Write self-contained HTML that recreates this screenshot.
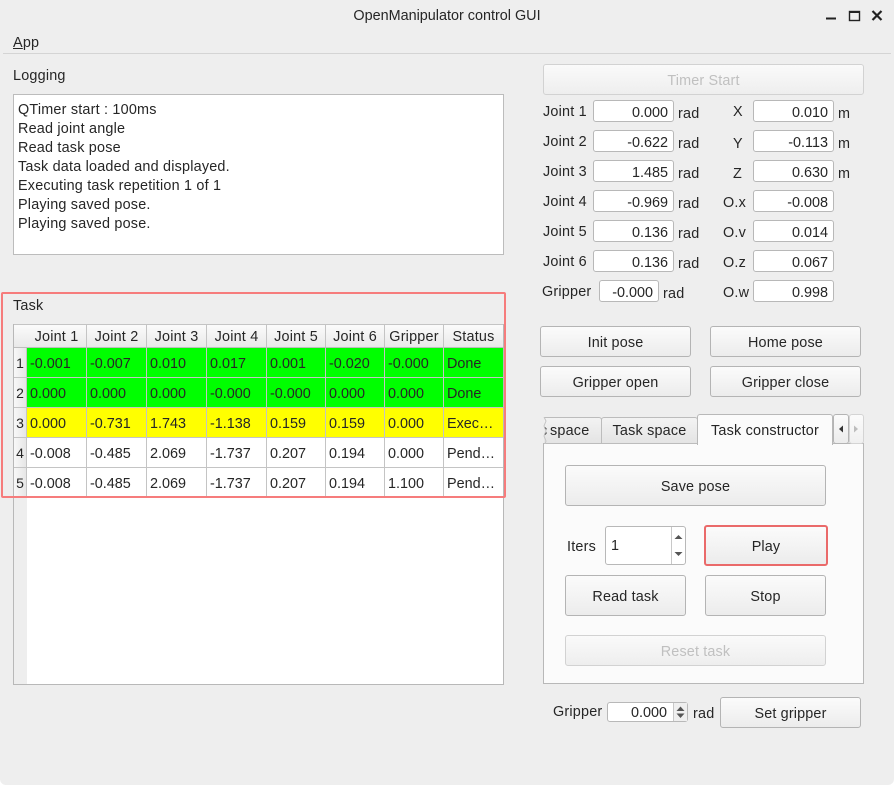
<!DOCTYPE html>
<html><head><meta charset="utf-8"><title>OpenManipulator control GUI</title>
<style>
html,body{margin:0;padding:0;background:#fff;width:894px;height:785px;overflow:hidden}
#w{position:absolute;left:0;top:0;width:894px;height:785px;background:#eeeeee;border-radius:0 0 6px 6px;font-family:"Liberation Sans",sans-serif;font-size:14.4px;color:#262626;overflow:hidden}
#w div,#w span{position:absolute;box-sizing:border-box}
.t{white-space:nowrap;line-height:20px;height:20px;letter-spacing:.2px;margin-top:1px}
.f{background:#fff;border:1px solid #b8b8b8;border-radius:3px;text-align:right;padding-right:5px;padding-top:1px;line-height:22px;width:81px;height:22px;white-space:nowrap}
.b{background:linear-gradient(#fbfbfb,#ececec);border:1px solid #b4b4b4;border-radius:3px;text-align:center;letter-spacing:.15px;white-space:nowrap;padding-top:1px}
.d{color:#c0c0c0;border-color:#d2d2d2;background:linear-gradient(#fafafa,#eeeeee)}
.c{width:60px;height:30px;border-right:1px solid #c4c4c4;border-bottom:1px solid #c4c4c4;line-height:31px;padding-left:3px;padding-top:1px;white-space:nowrap}
.h{height:24px;top:324px;background:linear-gradient(#fbfbfb,#e9e9e9);border-right:1px solid #c4c4c4;border-bottom:1px solid #bdbdbd;border-top:1px solid #c4c4c4;text-align:center;line-height:24px;letter-spacing:.2px;white-space:nowrap}
.r{left:14px;width:13px;height:30px;background:linear-gradient(90deg,#f8f8f8,#e6e6e6);border-bottom:1px solid #c4c4c4;border-right:1px solid #c4c4c4;line-height:31px;text-align:center;font-size:14px}
.g{background:#00ff00}.y{background:#ffff00}.e{background:#fff}
</style></head><body><div id="w">
<div class="t" style="left:0;width:894px;top:5px;text-align:center;letter-spacing:0">OpenManipulator control GUI</div>
<svg style="position:absolute;left:820px;top:5px" width="70" height="20"><path d="M6 13.500H16" stroke="#222" stroke-width="2"/><rect x="29.500" y="6.500" width="10" height="9" fill="none" stroke="#222" stroke-width="1.400"/><path d="M29.500 7H39.500" stroke="#222" stroke-width="2"/><path d="M52.500 6L61.500 15M61.500 6L52.500 15" stroke="#222" stroke-width="2.200"/></svg>
<div class="t" style="left:13px;top:32px"><u>A</u>pp</div>
<div style="left:3px;top:53px;width:888px;height:1px;background:#d4d4d4"></div>
<div class="t" style="left:13px;top:65px">Logging</div>
<div style="left:13px;top:94px;width:491px;height:161px;background:#fff;border:1px solid #bcbcbc"></div>
<div class="t" style="left:18px;top:99px">QTimer start : 100ms</div>
<div class="t" style="left:18px;top:118px">Read joint angle</div>
<div class="t" style="left:18px;top:137px">Read task pose</div>
<div class="t" style="left:18px;top:156px">Task data loaded and displayed.</div>
<div class="t" style="left:18px;top:175px">Executing task repetition 1 of 1</div>
<div class="t" style="left:18px;top:194px">Playing saved pose.</div>
<div class="t" style="left:18px;top:213px">Playing saved pose.</div>
<div class="t" style="left:13px;top:295px">Task</div>

<div style="left:13px;top:324px;width:491px;height:361px;background:#fff;border:1px solid #b8b8b8"></div>
<div style="left:14px;top:348px;width:13px;height:336px;background:#eeeeee"></div>
<div class="h" style="left:14px;width:13px;border-right:0"></div>
<div class="h" style="left:27px;width:60px">Joint 1</div>
<div class="h" style="left:87px;width:60px">Joint 2</div>
<div class="h" style="left:147px;width:60px">Joint 3</div>
<div class="h" style="left:207px;width:60px">Joint 4</div>
<div class="h" style="left:267px;width:59px">Joint 5</div>
<div class="h" style="left:326px;width:59px">Joint 6</div>
<div class="h" style="left:385px;width:59px">Gripper</div>
<div class="h" style="left:444px;width:59px;border-right:0">Status</div>

<div class="r" style="top:348px">1</div><div class="r" style="top:378px">2</div><div class="r" style="top:408px">3</div><div class="r" style="top:438px">4</div><div class="r" style="top:468px">5</div>

<div class="c g" style="left:27px;top:348px">-0.001</div><div class="c g" style="left:87px;top:348px">-0.007</div><div class="c g" style="left:147px;top:348px">0.010</div><div class="c g" style="left:207px;top:348px">0.017</div><div class="c g" style="left:267px;top:348px;width:59px">0.001</div><div class="c g" style="left:326px;top:348px;width:59px">-0.020</div><div class="c g" style="left:385px;top:348px;width:59px">-0.000</div><div class="c g" style="left:444px;top:348px;width:59px;border-right:0">Done</div>
<div class="c g" style="left:27px;top:378px">0.000</div><div class="c g" style="left:87px;top:378px">0.000</div><div class="c g" style="left:147px;top:378px">0.000</div><div class="c g" style="left:207px;top:378px">-0.000</div><div class="c g" style="left:267px;top:378px;width:59px">-0.000</div><div class="c g" style="left:326px;top:378px;width:59px">0.000</div><div class="c g" style="left:385px;top:378px;width:59px">0.000</div><div class="c g" style="left:444px;top:378px;width:59px;border-right:0">Done</div>
<div class="c y" style="left:27px;top:408px">0.000</div><div class="c y" style="left:87px;top:408px">-0.731</div><div class="c y" style="left:147px;top:408px">1.743</div><div class="c y" style="left:207px;top:408px">-1.138</div><div class="c y" style="left:267px;top:408px;width:59px">0.159</div><div class="c y" style="left:326px;top:408px;width:59px">0.159</div><div class="c y" style="left:385px;top:408px;width:59px">0.000</div><div class="c y" style="left:444px;top:408px;width:59px;border-right:0">Exec…</div>
<div class="c e" style="left:27px;top:438px">-0.008</div><div class="c e" style="left:87px;top:438px">-0.485</div><div class="c e" style="left:147px;top:438px">2.069</div><div class="c e" style="left:207px;top:438px">-1.737</div><div class="c e" style="left:267px;top:438px;width:59px">0.207</div><div class="c e" style="left:326px;top:438px;width:59px">0.194</div><div class="c e" style="left:385px;top:438px;width:59px">0.000</div><div class="c e" style="left:444px;top:438px;width:59px;border-right:0">Pend…</div>
<div class="c e" style="left:27px;top:468px">-0.008</div><div class="c e" style="left:87px;top:468px">-0.485</div><div class="c e" style="left:147px;top:468px">2.069</div><div class="c e" style="left:207px;top:468px">-1.737</div><div class="c e" style="left:267px;top:468px;width:59px">0.207</div><div class="c e" style="left:326px;top:468px;width:59px">0.194</div><div class="c e" style="left:385px;top:468px;width:59px">1.100</div><div class="c e" style="left:444px;top:468px;width:59px;border-right:0">Pend…</div>
<div style="left:1px;top:292px;width:505px;height:206px;border:2px solid #f67c7c;border-radius:2px"></div>

<div class="b d" style="left:543px;top:64px;width:321px;height:31px;line-height:30px">Timer Start</div>

<div class="t" style="left:543px;top:101px">Joint 1</div><div class="f" style="left:593px;top:100px">0.000</div><div class="t" style="left:678px;top:103px">rad</div><div class="t" style="left:733px;top:101px">X</div><div class="f" style="left:753px;top:100px">0.010</div><div class="t" style="left:838px;top:103px">m</div>
<div class="t" style="left:543px;top:131px">Joint 2</div><div class="f" style="left:593px;top:130px">-0.622</div><div class="t" style="left:678px;top:133px">rad</div><div class="t" style="left:733px;top:133px">Y</div><div class="f" style="left:753px;top:130px">-0.113</div><div class="t" style="left:838px;top:133px">m</div>
<div class="t" style="left:543px;top:161px">Joint 3</div><div class="f" style="left:593px;top:160px">1.485</div><div class="t" style="left:678px;top:163px">rad</div><div class="t" style="left:733px;top:163px">Z</div><div class="f" style="left:753px;top:160px">0.630</div><div class="t" style="left:838px;top:163px">m</div>
<div class="t" style="left:543px;top:191px">Joint 4</div><div class="f" style="left:593px;top:190px">-0.969</div><div class="t" style="left:678px;top:193px">rad</div><div class="t" style="left:723px;top:192px">O.x</div><div class="f" style="left:753px;top:190px">-0.008</div>
<div class="t" style="left:543px;top:221px">Joint 5</div><div class="f" style="left:593px;top:220px">0.136</div><div class="t" style="left:678px;top:223px">rad</div><div class="t" style="left:723px;top:222px">O.v</div><div class="f" style="left:753px;top:220px">0.014</div>
<div class="t" style="left:543px;top:251px">Joint 6</div><div class="f" style="left:593px;top:250px">0.136</div><div class="t" style="left:678px;top:253px">rad</div><div class="t" style="left:723px;top:252px">O.z</div><div class="f" style="left:753px;top:250px">0.067</div>
<div class="t" style="left:542px;top:281px">Gripper</div><div class="f" style="left:599px;top:280px;width:60px">-0.000</div><div class="t" style="left:663px;top:283px">rad</div><div class="t" style="left:723px;top:282px">O.w</div><div class="f" style="left:753px;top:280px">0.998</div>

<div class="b" style="left:540px;top:326px;width:151px;height:31px;line-height:30px">Init pose</div>
<div class="b" style="left:710px;top:326px;width:151px;height:31px;line-height:30px">Home pose</div>
<div class="b" style="left:540px;top:366px;width:151px;height:31px;line-height:30px">Gripper open</div>
<div class="b" style="left:710px;top:366px;width:151px;height:31px;line-height:30px">Gripper close</div>

<div style="left:543px;top:443px;width:321px;height:241px;background:#fbfbfb;border:1px solid #b8b8b8"></div>
<div style="left:544px;top:417px;width:58px;height:27px;background:linear-gradient(#f3f3f3,#e4e4e4);border:1px solid #bcbcbc;border-left:0;line-height:27px;letter-spacing:.2px;white-space:nowrap;overflow:hidden;border-radius:0 3px 0 0"><span style="left:-4px;top:0;letter-spacing:0">c</span><span style="left:6px;top:0">space</span></div>
<svg style="position:absolute;left:543px;top:417px" width="4" height="27"><path d="M1 0L3 4L1 9L3 14L1 19L3 24L2 27" fill="none" stroke="#c4c4c4"/></svg>
<div style="left:601px;top:417px;width:97px;height:27px;background:linear-gradient(#f3f3f3,#e4e4e4);border:1px solid #bcbcbc;line-height:27px;text-align:center;letter-spacing:.2px;border-radius:3px 3px 0 0">Task space</div>
<div style="left:697px;top:414px;width:136px;height:31px;background:#fbfbfb;border:1px solid #b8b8b8;border-bottom:0;line-height:32px;text-align:center;letter-spacing:.2px;border-radius:3px 3px 0 0">Task constructor</div>
<div style="left:833px;top:414px;width:16px;height:30px;background:linear-gradient(#fbfbfb,#ececec);border:1px solid #b4b4b4;border-radius:3px"></div>
<div style="left:849px;top:414px;width:15px;height:30px;background:linear-gradient(#fbfbfb,#f0f0f0);border:1px solid #d4d4d4;border-radius:3px"></div>
<svg style="position:absolute;left:833px;top:414px" width="31" height="30"><path d="M6 15L10 11.500V18.500Z" fill="#333"/><path d="M25 15L21 11.500V18.500Z" fill="#bdbdbd"/></svg>

<div class="b" style="left:565px;top:465px;width:261px;height:41px;line-height:40px">Save pose</div>
<div class="t" style="left:567px;top:536px">Iters</div>
<div style="left:605px;top:526px;width:81px;height:39px;background:#fff;border:1px solid #b8b8b8;border-radius:3px;line-height:39px;padding-left:5px">1</div>
<div style="left:671px;top:527px;width:1px;height:37px;background:#c8c8c8"></div>
<svg style="position:absolute;left:672px;top:527px" width="13" height="37"><path d="M2.500 12L6.500 8L10.500 12Z" fill="#555"/><path d="M2.500 25L6.500 29L10.500 25Z" fill="#555"/></svg>
<div class="b" style="left:704px;top:525px;width:124px;height:41px;line-height:39px;border:2px solid #ea6a6a">Play</div>
<div class="b" style="left:565px;top:575px;width:121px;height:41px;line-height:40px">Read task</div>
<div class="b" style="left:705px;top:575px;width:121px;height:41px;line-height:40px">Stop</div>
<div class="b d" style="left:565px;top:635px;width:261px;height:31px;line-height:30px">Reset task</div>

<div class="t" style="left:553px;top:701px">Gripper</div>
<div style="left:607px;top:702px;width:81px;height:20px;background:#fff;border:1px solid #b8b8b8;border-radius:3px;line-height:21px;text-align:right;padding-right:20px">0.000</div>
<div style="left:673px;top:703px;width:14px;height:18px;background:#efefef;border-left:1px solid #c8c8c8"></div>
<svg style="position:absolute;left:674px;top:703px" width="13" height="18"><path d="M2.500 8L6.500 3.500L10.500 8Z" fill="#555"/><path d="M2.500 10.500L6.500 15L10.500 10.500Z" fill="#555"/></svg>
<div class="t" style="left:693px;top:703px">rad</div>
<div class="b" style="left:720px;top:697px;width:141px;height:31px;line-height:30px">Set gripper</div>
</div></body></html>
